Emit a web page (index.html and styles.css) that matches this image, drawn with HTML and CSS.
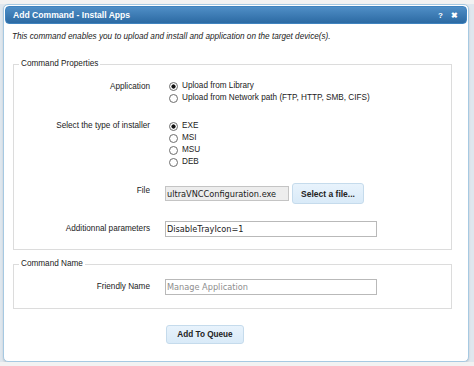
FILE: index.html
```html
<!DOCTYPE html>
<html lang="en">
<head>
  <meta charset="UTF-8">
  <title>Add Command - Install Apps</title>
  <meta name="viewport" content="width=device-width, initial-scale=1">
  <link rel="stylesheet" href="styles.css">
</head>
<body>

<div class="dialog">
  <div class="titlebar">
    <span class="title">Add Command - Install Apps</span>
    <span class="tools"><span class="help">?</span><span class="close">&#10006;</span></span>
  </div>

  <div class="content">
    <p class="intro">This command enables you to upload and install and application on the target device(s).</p>

    <fieldset class="group group-props">
      <legend>Command Properties</legend>

      <div class="row row-app">
        <div class="label">Application</div>
        <div class="options options-app">
          <label class="radio"><input type="radio" name="source" checked>Upload from Library</label>
          <label class="radio"><input type="radio" name="source">Upload from Network path (FTP, HTTP, SMB, CIFS)</label>
        </div>
      </div>

      <div class="row row-type">
        <div class="label">Select the type of installer</div>
        <div class="options">
          <label class="radio"><input type="radio" name="type" checked>EXE</label>
          <label class="radio"><input type="radio" name="type">MSI</label>
          <label class="radio"><input type="radio" name="type">MSU</label>
          <label class="radio"><input type="radio" name="type">DEB</label>
        </div>
      </div>

      <div class="row row-file">
        <div class="label">File</div>
        <div class="field">
          <input type="text" class="text file-name" value="ultraVNCConfiguration.exe" readonly>
          <button class="btn btn-select">Select a file...</button>
        </div>
      </div>

      <div class="row row-params">
        <div class="label">Additionnal parameters</div>
        <div class="field">
          <input type="text" class="text wide" value="DisableTrayIcon=1">
        </div>
      </div>
    </fieldset>

    <fieldset class="group group-name">
      <legend>Command Name</legend>
      <div class="row row-friendly">
        <div class="label">Friendly Name</div>
        <div class="field">
          <input type="text" class="text wide" placeholder="Manage Application">
        </div>
      </div>
    </fieldset>

    <div class="actions">
      <button class="btn btn-queue">Add To Queue</button>
    </div>
  </div>
</div>

</body>
</html>
```

FILE: styles.css
```css
:root {
  --page-bg: #dfe7ee;
  --dialog-border: #a6c9e2;
  --title-top: #4f8ec6;
  --title-bottom: #2c6aa3;
  --group-border: #dcdcdc;
  --text-color: #222;
  --input-border: #b9b9b9;
  --btn-border: #c5dbec;
}

body {
  margin: 0;
  background: linear-gradient(#f2f2f2 0 4px, var(--page-bg) 4px);
  font-family: "Liberation Sans", Arial, sans-serif;
  font-size: 8.2px;
  color: var(--text-color);
}

.dialog {
  margin: 4px 0 0 3px;
  width: 466px;
  height: 358px;
  box-sizing: border-box;
  padding: 1px;
  background-color: #fff;
  border: 1px solid var(--dialog-border);
  border-radius: 5px;
  box-shadow: 0 1px 2px rgba(0, 0, 0, 0.15);
}

.titlebar {
  height: 18px;
  display: flex;
  align-items: center;
  justify-content: space-between;
  padding: 0 8px 0 7px;
  background: linear-gradient(var(--title-top), var(--title-bottom));
  border: 1px solid #3f83bf;
  border-radius: 4px;
  box-sizing: border-box;
  color: #fff;
  font-size: 8.6px;
  font-weight: bold;
}

.tools {
  display: flex;
  gap: 8px;
  font-size: 8px;
}

.content {
  padding-left: 8px;
}

.intro {
  margin: 7px 0 0 -1px;
  line-height: 12px;
  font-style: italic;
}

.group {
  width: 439px;
  box-sizing: border-box;
  margin: 15px 0 0;
  padding: 0 0 12px;
  border: 1px solid var(--group-border);
}

.group legend {
  margin-left: 5px;
  padding: 0 2px;
  line-height: 12px;
}

.group-name {
  margin-top: 8px;
  padding-bottom: 13px;
}

.row {
  display: grid;
  grid-template-columns: 136px 1fr;
  column-gap: 15px;
}

.label {
  text-align: right;
  line-height: 12px;
}

.row-app {
  margin-top: 10px;
}

.row-app .label,
.options-app {
  line-height: 13px;
}

.row-type {
  margin-top: 16px;
}

.options {
  display: flex;
  flex-direction: column;
  line-height: 12px;
}

.radio {
  display: flex;
  align-items: center;
}

.radio input {
  appearance: none;
  width: 9px;
  height: 9px;
  margin: 0 4px;
  border: 1px solid #6d6d6d;
  border-radius: 50%;
  background-color: #fff;
  box-sizing: border-box;
}

.radio input:checked {
  background: radial-gradient(circle, #111 0 1.8px, #fff 2.4px);
}

.row-file {
  margin-top: 15px;
  align-items: center;
}

.row-file .label {
  margin-top: -5px;
}

.field {
  display: flex;
  align-items: center;
  gap: 3px;
}

.text {
  height: 16px;
  box-sizing: border-box;
  margin: 0;
  padding: 0 1px;
  border: 1px solid var(--input-border);
  font-family: "DejaVu Sans", Verdana, sans-serif;
  font-size: 8.2px;
  color: #222;
  background-color: #fff;
  outline: none;
}

.text::placeholder {
  color: #8e8e8e;
}

.file-name {
  width: 124px;
  height: 15px;
  background-color: #ededed;
  border-color: #c4c4c4;
}

.wide {
  width: 212px;
}

.btn {
  height: 20px;
  box-sizing: border-box;
  padding: 0 8px;
  background: linear-gradient(#e8f3fc, #d9eaf8);
  border: 1px solid var(--btn-border);
  border-radius: 3px;
  font-family: "Liberation Sans", Arial, sans-serif;
  font-size: 8.5px;
  font-weight: bold;
  color: #222;
}

.btn-select {
  width: 72px;
  height: 21px;
}

.row-params {
  margin-top: 17px;
  align-items: center;
}

.row-friendly {
  margin-top: 9px;
  align-items: center;
}

.actions {
  margin: 16px 0 0 153px;
}

.btn-queue {
  width: 78px;
  height: 19px;
  font-size: 8.2px;
}
```
